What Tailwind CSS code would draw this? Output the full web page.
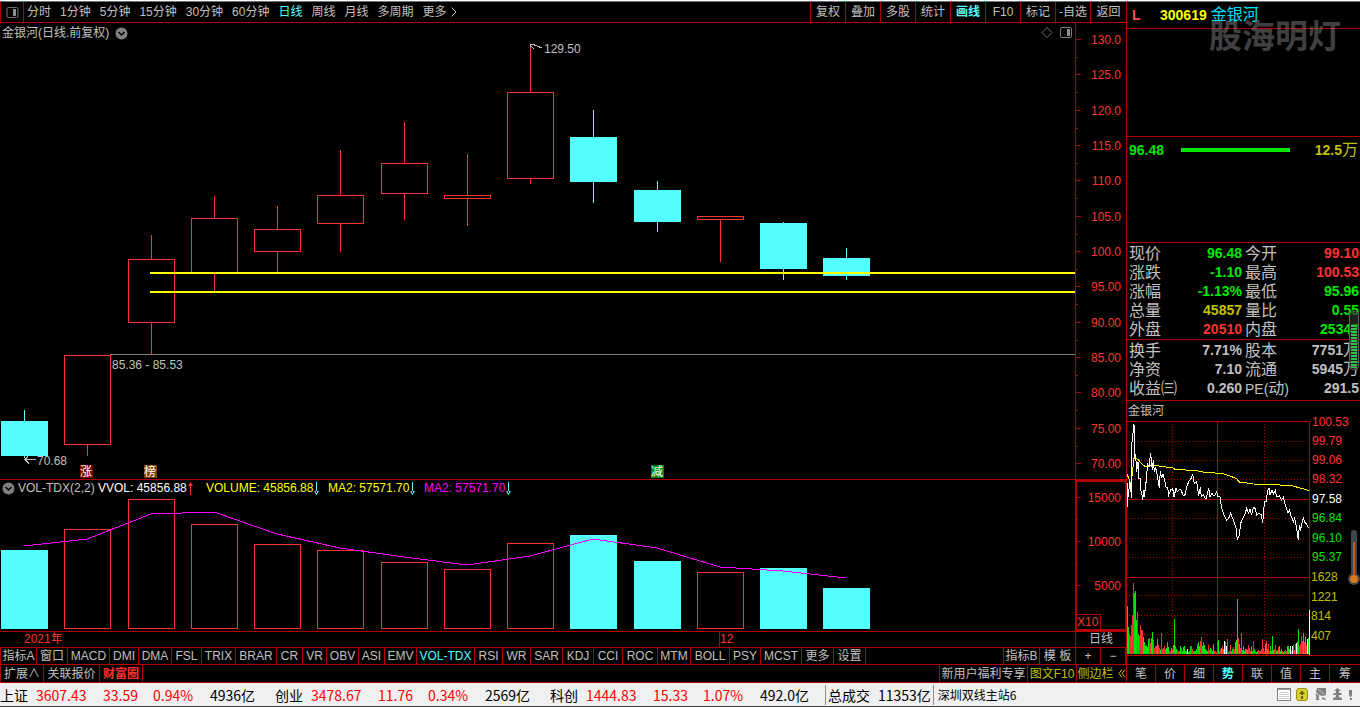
<!DOCTYPE html>
<html lang="zh-CN">
<head>
<meta charset="utf-8">
<meta name="viewport" content="width=device-width, initial-scale=1">
<title>金银河 300619</title>
<script src="https://cdn.jsdelivr.net/npm/@tailwindcss/browser@4"></script>
</head>
<body class="flex min-h-screen flex-col overflow-x-hidden bg-black font-['Liberation_Sans','Noto_Sans_CJK_SC',sans-serif] text-[12px] leading-4 whitespace-nowrap text-[#c0c0c0]">
<div class="h-[2px] shrink-0 border-b border-[#6a7474] bg-white"></div>

<div class="flex">
  <main class="min-w-0 flex-1">
    <nav class="flex h-[21px] items-center border-b border-l border-[#b00000]">
      <button aria-label="侧栏" class="flex h-5 w-[23px] shrink-0 items-center justify-center border-r border-[#b00000]">
        <svg width="13" height="13" viewBox="0 0 13 13"><rect x="1" y="1.500" width="11" height="10" rx="1.500" fill="none" stroke="#707070"/><rect x="7" y="3" width="3" height="7" fill="#909090"/></svg>
      </button>
      <div class="flex flex-1 gap-[9px] pl-[3px]">
        <button>分时</button><button>1分钟</button><button>5分钟</button><button>15分钟</button><button>30分钟</button><button>60分钟</button><button class="text-[#54ffff]">日线</button><button>周线</button><button>月线</button><button>多周期</button>
        <button class="flex items-center gap-1">更多<svg width="6" height="10" viewBox="0 0 6 10" fill="none" stroke="#c0c0c0"><path d="M.5 .5 5 5 .5 9.500"/></svg></button>
      </div>
      <div class="flex h-5 [&>button]:w-[35px] [&>button]:border-l [&>button]:border-[#b00000] [&>button:last-child]:w-[36px]">
        <button>复权</button><button>叠加</button><button>多股</button><button>统计</button><button class="font-bold text-[#54ffff]">画线</button><button>F10</button><button>标记</button><button>-自选</button><button>返回</button>
      </div>
    </nav>

    <section class="relative flex">
      <h1 class="absolute top-[2px] left-[2px] flex items-center gap-[6px]">金银河(日线.前复权)
        <svg width="13" height="13" viewBox="0 0 13 13"><circle cx="6.500" cy="6.500" r="6" fill="#808080"/><path d="M3.500 5l3 3 3-3" fill="none" stroke="#000" stroke-width="1.500"/></svg>
      </h1>
      <svg class="absolute top-[3px] right-[53px]" width="32" height="13" viewBox="0 0 32 13" fill="none" stroke="#707070"><path d="M6 1.500 11 6.500 6 11.500 1 6.500Z"/><rect x="19.500" y="1.500" width="11" height="10" rx="1.500" stroke="#808080"/><rect x="26" y="3" width="3" height="7" fill="#909090" stroke="none"/></svg>
      <svg id="price" class="h-[456px] min-w-0 flex-1" font-size="12" shape-rendering="crispEdges"></svg>
      <svg id="priceAxis" class="h-[456px] w-[51px] shrink-0 border-l border-[#b00000]" font-size="12" fill="#ff3232" shape-rendering="crispEdges"></svg>
    </section>

    <section class="relative flex border-t border-[#b00000]">
      <div class="absolute top-0 left-[2px] flex h-4 items-center">
        <svg class="mr-[3px]" width="13" height="13" viewBox="0 0 13 13"><circle cx="6.500" cy="6.500" r="6" fill="#808080"/><path d="M3.500 5l3 3 3-3" fill="none" stroke="#000" stroke-width="1.500"/></svg>
        <span class="w-[80px]">VOL-TDX(2,2)</span>
        <span class="flex w-[108px] items-center gap-px text-white">VVOL: 45856.88<svg width="5" height="13" viewBox="0 0 5 13" fill="#ff3232"><path d="M2 2h1v11H2zM0 4 2.500 0 5 4z"/></svg></span>
        <span class="flex w-[122px] items-center gap-px text-[#ffff00]">VOLUME: 45856.88<svg width="5" height="13" viewBox="0 0 5 13" fill="#54ffff"><path d="M2 0h1v11H2zM0 9 2.500 13 5 9z"/></svg></span>
        <span class="flex w-[96px] items-center gap-px text-[#ffff00]">MA2: 57571.70<svg width="5" height="13" viewBox="0 0 5 13" fill="#54ffff"><path d="M2 0h1v11H2zM0 9 2.500 13 5 9z"/></svg></span>
        <span class="flex items-center gap-px text-[#ff00ff]">MA2: 57571.70<svg width="5" height="13" viewBox="0 0 5 13" fill="#54ffff"><path d="M2 0h1v11H2zM0 9 2.500 13 5 9z"/></svg></span>
      </div>
      <svg id="volume" class="h-[151px] min-w-0 flex-1" shape-rendering="crispEdges"></svg>
      <div class="relative w-[51px] shrink-0 border-2 border-r border-[#b00000]">
        <svg id="volumeAxis" class="h-[147px] w-full" font-size="12" fill="#ff3232" shape-rendering="crispEdges"></svg>
        <span class="absolute bottom-0 left-0 h-[15px] w-6 border-t border-r border-[#b00000] leading-[14px] text-[#ff3232]">X10</span>
      </div>
    </section>

    <div class="flex h-4 border-t border-[#b00000] leading-[15px] text-[#ff3232]">
      <span class="w-[719px] shrink-0 pl-6">2021年</span>
      <span class="min-w-0 flex-1 border-l border-[#b00000]">12</span>
      <button class="w-[51px] shrink-0 border-l border-[#b00000] text-[#c0c0c0]">日线</button>
    </div>

    <nav class="flex h-[17px] border-t border-l border-[#b00000] [&>button]:shrink-0 [&>button]:border-r [&>button]:border-[#b00000]">
      <button class="w-[36px]">指标A</button><button class="w-[31px]">窗口</button><button class="w-[42px]">MACD</button><button class="w-[29px]">DMI</button><button class="w-[33px]">DMA</button><button class="w-[30px]">FSL</button><button class="w-[34px]">TRIX</button><button class="w-[41px]">BRAR</button><button class="w-[26px]">CR</button><button class="w-[24px]">VR</button><button class="w-[32px]">OBV</button><button class="w-[26px]">ASI</button><button class="w-[32px]">EMV</button><button class="w-[58px] text-[#54ffff]">VOL-TDX</button><button class="w-[28px]">RSI</button><button class="w-[28px]">WR</button><button class="w-[32px]">SAR</button><button class="w-[31px]">KDJ</button><button class="w-[29px]">CCI</button><button class="w-[35px]">ROC</button><button class="w-[33px]">MTM</button><button class="w-[39px]">BOLL</button><button class="w-[31px]">PSY</button><button class="w-[41px]">MCST</button><button class="w-[32px]">更多</button><button class="w-[32px]">设置</button>
      <span class="min-w-0 flex-1 border-r border-[#b00000]"></span>
      <button class="w-[36px]">指标B</button><button class="w-[36px]">模 板</button><button class="w-[25px]">+</button><button class="w-[25px]">−</button>
    </nav>
  </main>

  <aside class="relative w-[234px] shrink-0 border-l border-[#b00000]">
    <header class="relative flex h-[27px] items-center border-b border-[#b00000] pl-[5px] text-[14px]">
      <b class="w-7 text-[#ff5050]">L</b>
      <b class="mr-1 text-[#ffff00]">300619</b>
      <span class="text-[16px] text-[#00e0ff]">金银河</span>
      <strong class="absolute top-[15px] left-[82px] text-[33px] leading-10 text-[#808080]/50">股海明灯</strong>
    </header>
    <div class="h-[108px] border-b border-[#b00000]"></div>
    <div class="flex h-[106px] items-start gap-[17px] border-b border-[#b00000] px-[2px] pt-[3px] text-[14px] leading-5 font-bold">
      <span class="text-[#00e600]">96.48</span>
      <span class="mt-2 h-1 w-[109px] bg-[#00e600]"></span>
      <span class="ml-auto flex text-[#c0c000]">12.5<span class="text-[16px] font-normal">万</span></span>
    </div>

    <div class="h-[97px] border-b border-[#b00000] pt-px">
      <table class="w-full table-fixed text-[14px] leading-[19px] [&_td]:p-0 [&_td]:pr-px [&_td]:text-right [&_td]:font-bold [&_th]:p-0 [&_th]:pl-[2px] [&_th]:text-left [&_th]:text-[16px] [&_th]:font-normal [&_tr]:h-[19px]">
        <colgroup><col class="w-[42px]"><col class="w-[74px]"><col class="w-[42px]"><col></colgroup>
        <tbody>
        <tr><th>现价</th><td class="text-[#00e600]">96.48</td><th>今开</th><td class="text-[#ff3232]">99.10</td></tr>
        <tr><th>涨跌</th><td class="text-[#00e600]">-1.10</td><th>最高</th><td class="text-[#ff3232]">100.53</td></tr>
        <tr><th>涨幅</th><td class="text-[#00e600]">-1.13%</td><th>最低</th><td class="text-[#00e600]">95.96</td></tr>
        <tr><th>总量</th><td class="text-[#c0c000]">45857</td><th>量比</th><td class="text-[#00e600]">0.55</td></tr>
        <tr><th>外盘</th><td class="text-[#ff3232]">20510</td><th>内盘</th><td class="text-[#00e600]">25347</td></tr>
        </tbody>
      </table>
    </div>
    <div class="h-[61px] border-b border-[#b00000] pt-px">
      <table class="w-full table-fixed text-[14px] leading-[19px] [&_span]:leading-none [&_td]:p-0 [&_td]:pr-px [&_td]:text-right [&_td]:font-bold [&_th]:p-0 [&_th]:pl-[2px] [&_th]:text-left [&_th]:text-[16px] [&_th]:font-normal [&_tr]:h-[19px]">
        <colgroup><col class="w-[42px]"><col class="w-[74px]"><col class="w-[42px]"><col></colgroup>
        <tbody>
        <tr><th>换手</th><td>7.71%</td><th>股本</th><td>7751<span class="text-[16px] font-normal">万</span></td></tr>
        <tr><th>净资</th><td>7.10</td><th>流通</th><td>5945<span class="text-[16px] font-normal">万</span></td></tr>
        <tr><th>收益㈢</th><td>0.260</td><th><span class="text-[14px]">PE(</span>动<span class="text-[14px]">)</span></th><td>291.5</td></tr>
        </tbody>
      </table>
    </div>

    <h2 class="h-5 pt-[2px] pl-px">金银河</h2>
    <svg class="h-[234px] w-full overflow-visible" font-size="12" shape-rendering="crispEdges">
      <svg id="intraday" x="0" y="0" width="183" height="234" viewBox="21 63 549 702" fill="none" stroke-width="3"></svg>
      <g id="intradayLabels"></g>
    </svg>
    <div class="border-t border-[#b00000]"></div>

    <svg class="absolute top-[309px] right-px" width="10" height="59" viewBox="0 0 10 59"><rect x=".5" y=".5" width="9" height="58" rx="3" fill="#303030" fill-opacity=".65" stroke="#606060"/><path d="M5 14v43" stroke="#30c050" stroke-width="6" stroke-dasharray="2 1"/></svg>
    <svg class="absolute top-[528px] right-0" width="12" height="56" viewBox="0 0 12 56"><rect x="3" y="0" width="6" height="50" rx="3" fill="#3c4850"/><circle cx="6" cy="49" r="6" fill="#3c4850"/><path d="M5 12h2v36H5z" fill="#e05010"/><circle cx="6" cy="49" r="4" fill="#e07810"/></svg>
  </aside>
</div>

<nav class="flex h-[18px] border-t border-[#b00000] [&_button]:shrink-0 [&_button]:border-l [&_button]:border-[#b00000]">
  <div class="flex min-w-0 flex-1">
    <button class="w-[43px]">扩展∧</button><button class="w-[56px]">关联报价</button><button class="w-[44px] border-r font-bold text-[#ff3232]">财富圈</button>
  </div>
  <button class="w-[88px]">新用户福利专享</button><button class="w-[49px] text-[#c0c000]">图文F10</button>
  <button class="flex w-[50px] items-center justify-center gap-1 text-[#c0c000]">侧边栏<svg width="8" height="9" viewBox="0 0 8 9" fill="none" stroke="#c0c000"><path d="M4 .5 1 4.500 4 8.500M7 .5 4 4.500 7 8.500"/></svg></button>
  <div class="flex w-[234px] shrink-0 [&>button]:w-[29px]">
    <button>笔</button><button>价</button><button>细</button><button class="font-bold text-[#54ffff]">势</button><button>联</button><button>值</button><button>主</button><button class="flex-1">筹</button>
  </div>
</nav>

<footer class="flex h-[25px] shrink-0 items-center border-t border-b border-t-[#b00000] border-b-[#404040] bg-[#f0f0f0] font-['Noto_Sans_CJK_SC',sans-serif] text-[14px] leading-5 text-black">
  <div class="flex w-[275px] shrink-0"><span class="w-9">上证</span><span class="w-[67px] text-[#ff0000]">3607.43</span><span class="w-[50px] text-[#ff0000]">33.59</span><span class="w-[57px] text-[#ff0000]">0.94%</span><span>4936亿</span></div>
  <div class="flex w-[275px] shrink-0"><span class="w-9">创业</span><span class="w-[67px] text-[#ff0000]">3478.67</span><span class="w-[50px] text-[#ff0000]">11.76</span><span class="w-[57px] text-[#ff0000]">0.34%</span><span>2569亿</span></div>
  <div class="flex w-[275px] shrink-0"><span class="w-9">科创</span><span class="w-[67px] text-[#ff0000]">1444.83</span><span class="w-[50px] text-[#ff0000]">15.33</span><span class="w-[57px] text-[#ff0000]">1.07%</span><span>492.0亿</span></div>
  <div class="flex shrink-0 gap-2 border-l border-[#909090] px-[2px]"><span>总成交</span><span>11353亿</span></div>
  <span class="flex-1 border-l border-[#909090] pl-1 text-[12px]">深圳双线主站6</span>
  <svg class="mr-[7px] shrink-0" width="76" height="15" viewBox="0 0 76 15">
    <rect x=".5" y="1.500" width="13" height="12" fill="#fff" stroke="#808080"/><path d="M1 2.500h12" stroke="#a0a0a0"/><path d="M2 5.500h10M2 7.500h10M2 9.500h10M2 11.500h10" stroke="#d0d0d0"/>
    <rect x="19.500" y="1.500" width="11" height="12" rx="2.500" fill="#d8d030" stroke="#989010"/><path d="M25 3.500 28 7h-2v1h-2V7h-2zM24 9h2v3h-2z" fill="#686000"/>
    <path d="M40 1h9v7l-3 1-4-1-3-3zM38.500 6l4 3-1 1 1 3h-4l1-2zM45 10l4 2-1 1-3-1z" fill="#808080"/><path d="M41 2l6 5" stroke="#c8c8c8"/>
    <path d="M60.500 1 64 4h-2v2h2l1 2h-3v2l3 1v2h-9v-2l3-1V8h-3l1-2h2V4h-2z" fill="#808080"/>
    <path d="M72 3h3v5l-1 2h-1l-1-2zM73 11h2v2h-2z" fill="#808080"/>
  </svg>
</footer>

<script>
const RED = '#ff3232', CYAN = '#54ffff', LINE = '#b00000', GREEN = '#00e600';
const rect = (x, y, w, h, fill) => `<rect x="${x}" y="${y}" width="${w}" height="${h}" fill="${fill}"/>`;
const frame = (x, y, w, h) => `<rect x="${x + .5}" y="${y + .5}" width="${w - 1}" height="${h - 1}" fill="none" stroke="${RED}"/>`;

// left edge, high, body top, body bottom, low, rising, top of the volume bar
const days = [
  [1,387,398,433,435,0,70],[64,332,332,422,433,1,49],[128,212,236,300,331,1,19],[191,173,195,250,268,1,44],
  [254,183,206,229,249,1,64],[317,127,172,201,229,1,70],[381,99,140,171,197,1,82],[444,131,172,176,203,1,89],
  [507,23,69,156,161,1,63],[570,87,114,159,180,0,55],[634,158,167,199,209,0,81],[697,193,193,197,239,1,92],
  [760,199,200,246,257,0,88],[823,225,235,253,257,0,108]
];
let price = '<rect x="110" y="331" width="100%" height="1" fill="#808080"/>', volume = '';
for (const [x, hi, top, bottom, lo, up, vol] of days) {
  const c = up ? RED : CYAN;
  price += rect(x + 23, hi, 1, top - hi, c) + rect(x + 23, bottom, 1, lo - bottom, c);
  price += up ? frame(x, top, 47, bottom - top) : rect(x, top, 47, bottom - top, c);
  volume += up ? frame(x, vol, 47, 149 - vol) : rect(x, vol, 47, 149 - vol, c);
}
for (const y of [249, 268]) price += `<rect x="150" y="${y}" width="100%" height="2" fill="#ffff00"/>`;
for (const [x, t, c] of [[80, '涨', '#800000'], [144, '榜', '#804000'], [651, '减', '#008000']])
  price += rect(x, 442, 13, 13, c) + `<text x="${x}" y="453" fill="#fff">${t}</text>`;
price += `<g fill="#c0c0c0"><text x="112" y="346">85.36 - 85.53</text><text x="37" y="442">70.68</text><text x="544" y="30">129.50</text></g>
  <path d="M36 436.500H24M28 433.500l-3 3 4 4M530.500 24v-2.500h4M530 22l4 4M532 21l10 4" fill="none" stroke="#c0c0c0"/>`;
document.getElementById('price').innerHTML = price;

volume += '<polyline fill="none" stroke="#ff00ff" points="24,66 87,59 151,34 214,32 277,54 340,68 404,77 467,85 530,76 593,59 657,68 720,87 783,91 846,98"/>';
document.getElementById('volume').innerHTML = volume;

let axis = '';
for (let i = 0; i < 13; i++) {
  const y = Math.round(16 + i * 35.33), v = 130 - i * 5;
  axis += rect(0, y, 5, 1, LINE) + `<text x="45" y="${y + 5}" text-anchor="end">${v.toFixed(v >= 100 ? 1 : 2)}</text>`;
  if (i < 12) axis += rect(0, y + 18, 2, 1, LINE);
}
document.getElementById('priceAxis').innerHTML = axis;

axis = '';
[15000, 10000, 5000].forEach((v, i) => {
  const y = 15 + i * 44;
  axis += rect(0, y, 4, 1, LINE) + `<text x="44" y="${y + 5}" text-anchor="end">${v}</text>`;
  if (i < 2) axis += rect(0, y + 22, 1, 1, LINE);
});
document.getElementById('volumeAxis').innerHTML = axis;

let day = `<g stroke="${LINE}"><path d="M21 64.500H569M21 298.500H569M21 532.500H569M292.500 63V765M568.500 63V765"/>
  <path stroke-dasharray="3 6" d="M27 124.500H567M27 181.500H567M27 238.500H567M27 355.500H567M27 415.500H567M27 472.500H567M27 586.500H567M27 646.500H567M27 703.500H567M157.500 72V765M433.500 72V765"/></g>`;
const heights = [48,27,20,18,29,39,71,61,63,34,42,20,18,29,24,24,17,12,8,9,7,15,16,11,16,22,14,6,8,8,15,9,6,4,21,5,6,8,5,6,12,7,3,3,6,4,9,35,8,5,4,3,3,8,6,3,7,8,3,3,5,2,3,8,8,5,3,3,3,5,10,12,8,13,17,8,12,9,5,4,3,9,4,6,5,3,10,3,3,2,13,14,3,5,6,8,5,13,12,8,15,2,3,9,3,5,7,5,12,14,55,16,10,6,21,4,8,3,5,5,4,9,6,3,8,3,13,5,3,2,3,4,3,3,5,15,6,3,10,13,5,10,3,8,3,18,4,5,9,3,4,7,8,3,5,3,2,3,4,3,8,8,5,8,3,8,9,4,10,11,12,25,8,10,18,13,21,12,17,9,15,16];
const whites = [60, 97, 99, 163, 165, 169, 180];
heights.forEach((h, i) => {
  const red = i < 2 ? 0 : i < 7 ? 1 : (i * 7 + h * 5) % 9 < 4;
  const fill = whites.includes(i) ? '#fff' : h > 50 && i > 6 || h === 35 || !red ? GREEN : RED;
  day += rect(21 + i * 3, 762 - h * 3, 3, h * 3, fill);
});
day += `<polyline stroke="#ffff00" points="21,222 25,232 33,253 37,220 42,175 48,175 56,180 62,188 70,197 80,200 95,196 110,197 160,204 165,208 230,212 250,216 310,221 330,228 350,236 358,246 380,249 400,252 460,254 515,257 540,264 566,271"/>
<polyline stroke="#fff" points="22,320 22,250 26,290 28,245 32,255 34,295 34,140 38,110 42,72 44,170 47,165 50,215 54,185 56,235 60,235 62,270 66,285 68,300 71,270 74,290 76,255 80,240 82,190 87,200 89,182 92,160 95,190 97,210 100,180 103,215 107,205 110,215 114,240 118,265 121,212 125,235 129,222 134,240 138,262 143,262 146,285 152,270 158,265 162,290 168,265 172,275 178,268 184,270 188,285 194,288 200,262 206,245 212,238 218,224 223,250 230,245 236,288 241,262 244,290 250,285 258,298 266,265 270,290 276,280 280,288 286,284 290,275 294,290 300,290 304,320 312,345 320,360 326,355 332,340 336,350 342,365 348,385 352,420 358,405 362,370 368,355 374,345 380,325 386,340 390,328 395,345 400,322 405,325 410,345 418,340 424,345 428,370 431,330 434,305 439,305 442,275 447,263 450,285 456,270 461,282 466,272 470,290 478,288 484,300 490,292 494,310 500,325 504,340 508,330 514,350 520,365 524,355 530,385 535,420 538,375 542,388 546,370 550,355 556,370 560,372 566,385"/>
<path stroke="#fff" d="M568.500 630V765"/>`;
document.getElementById('intraday').innerHTML = day;

document.getElementById('intradayLabels').innerHTML = [
  ['100.53', 1, RED], ['99.79', 20, RED], ['99.06', 39, RED], ['98.32', 58, RED], ['97.58', 78, '#fff'],
  ['96.84', 97, GREEN], ['96.10', 117, GREEN], ['95.37', 136, GREEN],
  ['1628', 156, '#c0c000'], ['1221', 176, '#c0c000'], ['814', 195, '#c0c000'], ['407', 215, '#c0c000']
].map(([t, y, c], i) => `<text x="${i < 8 ? 185 : 184}" y="${y + 4}" fill="${c}">${t}</text>`).join('');
</script>
</body>
</html>
